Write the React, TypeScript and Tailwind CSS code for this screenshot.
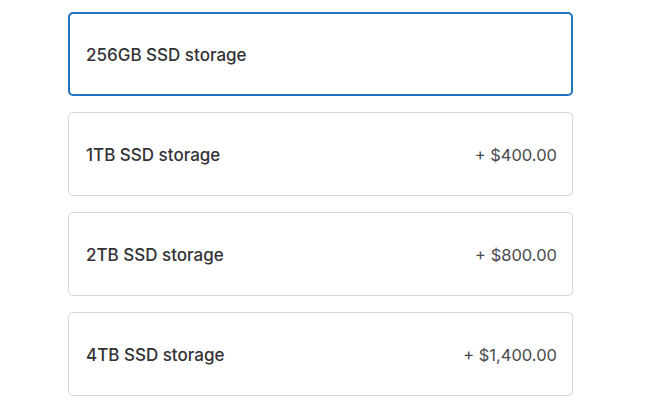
import React from "react";

const options = [
  { label: "256GB SSD storage", price: "" },
  { label: "1TB SSD storage", price: "+ $400.00" },
  { label: "2TB SSD storage", price: "+ $800.00" },
  { label: "4TB SSD storage", price: "+ $1,400.00" },
];

export default function App() {
  return (
    <div
      className="w-[646px] h-[407px] bg-white pt-3 pl-[68px]"
      style={{ fontFamily: "Inter, 'Noto Sans', sans-serif" }}
    >
      <div className="w-[505px] flex flex-col gap-4">
        {options.map((o, i) => (
          <div
            key={o.label}
            className={
              i === 0
                ? "h-[84px] flex items-center justify-between rounded-[5px] border-2 border-[#1f74c0] pl-4 pr-[14px] pt-[3px]"
                : "h-[84px] flex items-center justify-between rounded-[5px] border border-[#d6d6d6] pl-[17px] pr-[15px] pt-[3px]"
            }
          >
            <span className="text-[17px] font-medium text-[#333336]">{o.label}</span>
            {o.price && <span className="text-[16.5px] font-normal text-[#4a4a4d]">{o.price}</span>}
          </div>
        ))}
      </div>
    </div>
  );
}
